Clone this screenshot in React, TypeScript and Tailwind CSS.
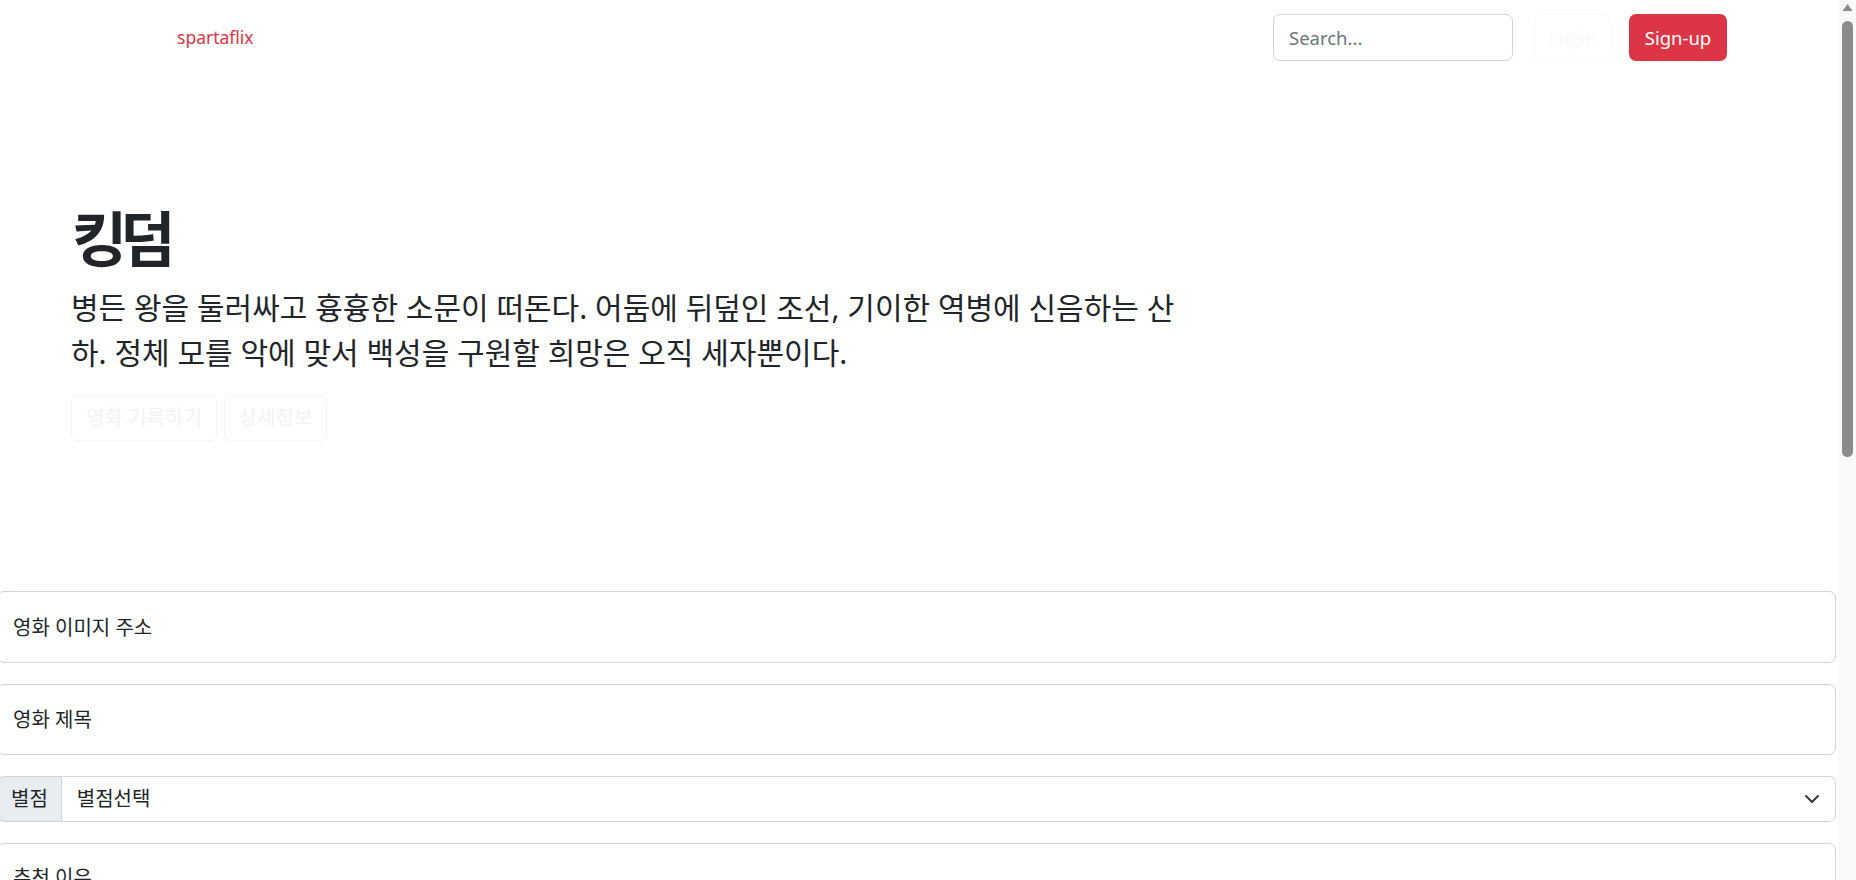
import { useState } from 'react';

// hero copy for the featured title
const HERO = {
  title: '킹덤',
  desc: '병든 왕을 둘러싸고 흉흉한 소문이 떠돈다. 어둠에 뒤덮인 조선, 기이한 역병에 신음하는 산하. 정체 모를 악에 맞서 백성을 구원할 희망은 오직 세자뿐이다.',
};

const STARS = ['⭐', '⭐⭐', '⭐⭐⭐', '⭐⭐⭐⭐', '⭐⭐⭐⭐⭐'];

function Navbar() {
  return (
    <nav className="flex h-[75px] items-center pl-[177px] pr-[112px]">
      <a href="#" className="text-[17.5px] text-[#dc3545]">spartaflix</a>
      <div className="ml-auto flex items-center">
        <input
          placeholder="Search..."
          className="h-[47px] w-[240px] rounded-[7px] border border-[#ced4da] px-[15px] text-[18.5px] text-[#212529] outline-none placeholder:text-[#6c757d]"
        />
        <button className="ml-[21px] h-[47px] w-[77px] rounded-[7px] border border-[#f8f9fa] text-[18.5px] text-[#f8f9fa]">
          Login
        </button>
        <button className="ml-[18px] h-[47px] w-[98px] rounded-[7px] bg-[#dc3545] text-[18.5px] text-white">
          Sign-up
        </button>
      </div>
    </nav>
  );
}

function Hero() {
  return (
    <section className="pl-[71px] pt-[128px]">
      <h1 className="ml-[1px] text-[60px] font-bold leading-[1.2] tracking-[-7px] text-[#212529]">{HERO.title}</h1>
      <p className="mt-[10px] w-[1125px] text-[30px] leading-[45px] text-[#212529]">{HERO.desc}</p>
      <div className="mt-[20px] flex gap-[7px]">
        <button className="h-[46px] w-[146px] rounded-[7px] border border-[#f3f4f5] text-[20px] text-[#f1f2f3]">
          영화 기록하기
        </button>
        <button className="h-[46px] w-[103px] rounded-[7px] border border-[#f3f4f5] text-[20px] text-[#f1f2f3]">
          상세정보
        </button>
      </div>
    </section>
  );
}

function PostForm() {
  const [star, setStar] = useState('');

  return (
    <form className="-ml-[3px] mr-[3px] mt-[150px] flex flex-col gap-[21px]">
      <input
        placeholder="영화 이미지 주소"
        className="h-[72px] w-full rounded-[7px] border border-[#ced4da] px-[15px] text-[20px] text-[#212529] outline-none placeholder:text-[#212529]"
      />
      <input
        placeholder="영화 제목"
        className="h-[71px] w-full rounded-[7px] border border-[#ced4da] px-[15px] text-[20px] text-[#212529] outline-none placeholder:text-[#212529]"
      />
      <div className="flex h-[46px] w-full">
        <span className="flex items-center rounded-l-[7px] border border-[#ced4da] bg-[#e9ecef] px-[13px] text-[20px] text-[#212529]">
          별점
        </span>
        <div className="relative -ml-px flex-1">
          <select
            value={star}
            onChange={(e) => setStar(e.target.value)}
            className="h-full w-full appearance-none rounded-r-[7px] border border-[#ced4da] bg-white px-[15px] text-[20px] text-[#212529] outline-none"
          >
            <option value="">별점선택</option>
            {STARS.map((s, i) => (
              <option key={i} value={i + 1}>{s}</option>
            ))}
          </select>
          <svg
            viewBox="0 0 16 16"
            className="pointer-events-none absolute right-[16px] top-1/2 h-[16px] w-[16px] -translate-y-1/2"
            fill="none"
            stroke="#343a40"
            strokeWidth="2"
            strokeLinecap="round"
            strokeLinejoin="round"
          >
            <path d="m2 5 6 6 6-6" />
          </svg>
        </div>
      </div>
      <textarea
        placeholder="추천 이유"
        className="h-[125px] w-full resize-none rounded-[7px] border border-[#ced4da] px-[15px] pt-[19px] text-[20px] text-[#212529] outline-none placeholder:text-[#212529]"
      />
    </form>
  );
}

// browser-style vertical scrollbar seen at the right edge of the page
function ScrollBar() {
  return (
    <div className="flex w-[17px] shrink-0 flex-col items-center bg-[#f9f9f9]">
      <svg viewBox="0 0 17 17" className="h-[17px] w-[17px]">
        <polygon points="3.5,11 8.5,4 13.5,11" fill="#8b8b8b" />
      </svg>
      <div className="mt-[4px] h-[436px] w-[11px] rounded-full bg-[#8b8b8b]" />
    </div>
  );
}

export default function App() {
  return (
    <div className="flex h-screen overflow-hidden bg-white font-[family-name:'Noto_Sans','Noto_Sans_CJK_KR',sans-serif] text-[#212529]">
      <main className="min-w-0 flex-1 overflow-hidden">
        <Navbar />
        <Hero />
        <PostForm />
      </main>
      <ScrollBar />
    </div>
  );
}
